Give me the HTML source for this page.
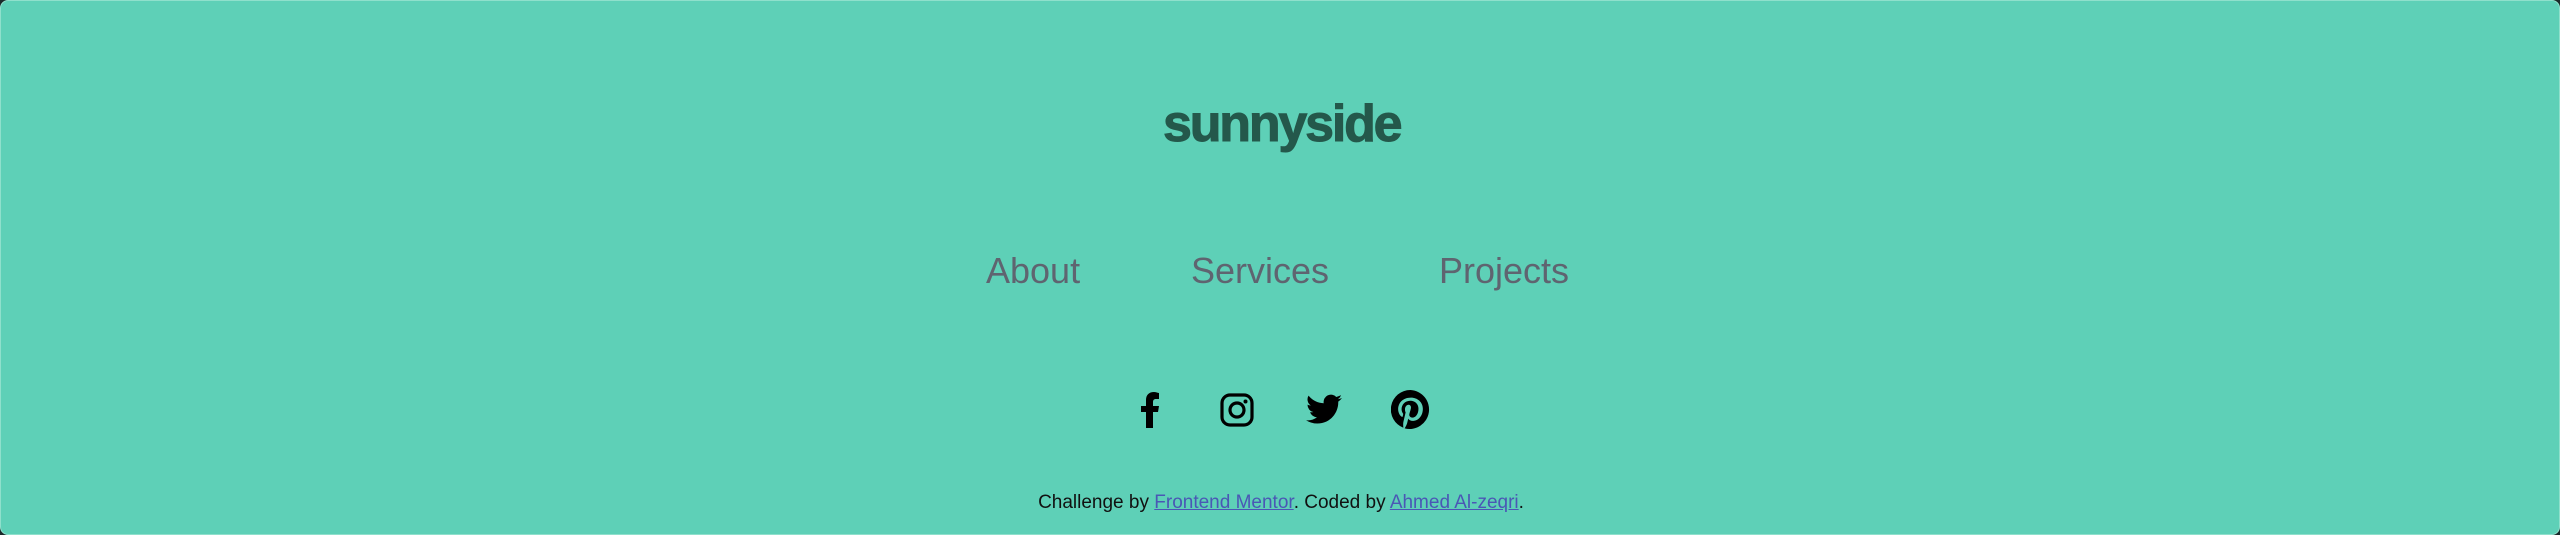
<!DOCTYPE html>
<html><head><style>
html,body{margin:0;padding:0;width:2560px;height:535px;background:#1a2a2a;overflow:hidden}
.c{position:absolute;left:0;top:0;width:2558px;height:533px;background:#5ed0b7;border:1px solid #8fe0cc;border-radius:8px;font-family:"Liberation Sans",sans-serif}
.t{position:absolute;white-space:nowrap;line-height:1}
.logo{left:1162px;top:97px;font-size:52px;font-weight:bold;color:#24584b;letter-spacing:-2.2px;width:236px;text-align:center;-webkit-text-stroke:1px #24584b}
.nav{font-size:36px;color:#5f6470;top:252px}
.ft{font-size:19px;color:#111;left:1030px;top:492px;width:500px;text-align:center}
.ft a{color:#4a57b5;text-decoration:underline}
svg{position:absolute}
</style></head><body><div class="c">
<div class="t logo">sunnyside</div>
<div class="t nav" style="left:985px">About</div>
<div class="t nav" style="left:1190px">Services</div>
<div class="t nav" style="left:1438px">Projects</div>

<svg style="left:1137px;top:391px" width="24" height="36" viewBox="0 0 24 36"><path d="M15 36V20h5l1-6h-6v-4c0-2 1-3 3-3h3V1c-1 0-3-1-5-1-5 0-8 3-8 8v6H3v6h5v16z" fill="#000"/></svg>
<svg style="left:1219px;top:392px" width="34" height="34" viewBox="0 0 34 34"><rect x="2" y="2" width="30" height="30" rx="8" fill="none" stroke="#000" stroke-width="3.2"/><circle cx="17" cy="17" r="7" fill="none" stroke="#000" stroke-width="3.2"/><circle cx="25.5" cy="8.5" r="2" fill="#000"/></svg>
<svg style="left:1305px;top:393px" width="36" height="32" viewBox="0 0 24 21"><path d="M24 2.5a10 10 0 0 1-2.8.8A5 5 0 0 0 23.3.6a10 10 0 0 1-3.1 1.2A4.9 4.9 0 0 0 11.8 6 14 14 0 0 1 1.7.9a4.9 4.9 0 0 0 1.5 6.6A4.9 4.9 0 0 1 1 6.9 4.9 4.9 0 0 0 4.9 11.8a5 5 0 0 1-2.2.1 4.9 4.9 0 0 0 4.6 3.4A9.9 9.9 0 0 1 0 17.3 14 14 0 0 0 7.5 19.5c9.1 0 14-7.5 14-14v-.6A10 10 0 0 0 24 2.5z" fill="#000"/></svg>
<svg style="left:1390px;top:389px" width="39" height="39" viewBox="0 0 24 24"><path d="M12 0a12 12 0 0 0-4.4 23.2c-.1-.9-.2-2.4 0-3.4l1.4-6s-.4-.7-.4-1.8c0-1.7 1-2.9 2.2-2.9 1 0 1.5.8 1.5 1.7 0 1-.7 2.6-1 4-.3 1.2.6 2.2 1.8 2.2 2.1 0 3.8-2.3 3.8-5.5 0-2.9-2.1-4.9-5-4.9-3.4 0-5.4 2.6-5.4 5.2 0 1 .4 2.1.9 2.7.1.1.1.2.1.4l-.3 1.4c-.1.2-.2.3-.4.2-1.5-.7-2.4-2.9-2.4-4.6 0-3.8 2.7-7.2 7.9-7.2 4.1 0 7.3 2.9 7.3 6.9 0 4.1-2.6 7.4-6.2 7.4-1.2 0-2.4-.6-2.8-1.4l-.7 2.9c-.3 1-1 2.3-1.5 3.1A12 12 0 1 0 12 0z" fill="#000"/></svg>

<div class="t ft">Challenge by <a>Frontend Mentor</a>. Coded by <a>Ahmed Al-zeqri</a>.</div>
</div></body></html>
